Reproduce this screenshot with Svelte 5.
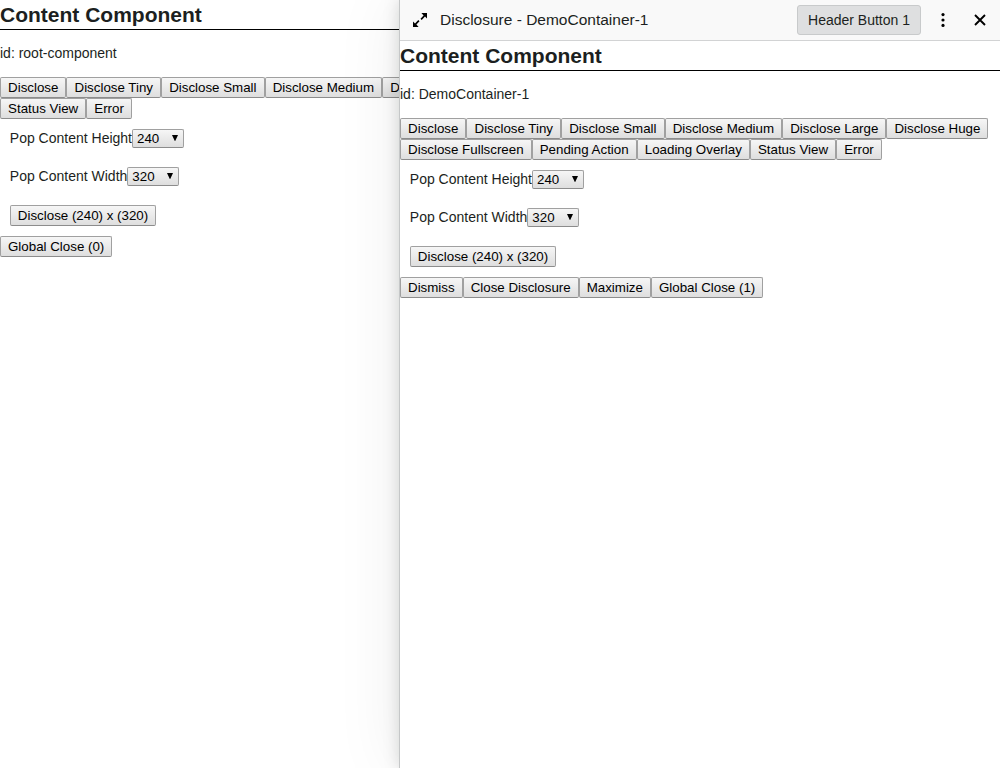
<script>
  const actions = ['Disclose', 'Disclose Tiny', 'Disclose Small', 'Disclose Medium', 'Disclose Large', 'Disclose Huge', 'Disclose Fullscreen', 'Pending Action', 'Loading Overlay', 'Status View', 'Error'];
</script>

{#snippet picker(label, value)}
  <div class="field">
    <span>{label}</span><button class="select"><span>{value}</span><svg width="6" height="6" viewBox="0 0 6 6"><path d="M0 0h6L3.2 6h-.4z" /></svg></button>
  </div>
{/snippet}

{#snippet content(id, footer)}
  <h2>Content Component</h2>
  <p>id: {id}</p>
  <div class="row">
    {#each actions as action}<button class="btn">{action}</button>{/each}
  </div>
  <div class="form">
    {@render picker('Pop Content Height', 240)}
    {@render picker('Pop Content Width', 320)}
    <button class="btn">Disclose (240) x (320)</button>
  </div>
  <div class="row footer">
    {#each footer as action}<button class="btn">{action}</button>{/each}
  </div>
{/snippet}

<div class="page">
  <main>{@render content('root-component', ['Global Close (0)'])}</main>
  <aside>
    <header>
      <svg class="expand" width="14" height="14" viewBox="0 0 14 14">
        <path d="M8.4 0H14v5.6l-2-2-3.3 3.3-1.2-1.2 3.1-3.3zM0 8.4l2 2 3.3-3.3 1.2 1.2-3.1 3.3 2.2 2.4H0z" />
      </svg>
      <span class="title">Disclosure - DemoContainer-1</span>
      <button class="header-btn">Header Button 1</button>
      <svg class="dots" width="4" height="14" viewBox="0 0 4 14">
        <circle cx="2" cy="1.6" r="1.6" /><circle cx="2" cy="7" r="1.6" /><circle cx="2" cy="12.4" r="1.6" />
      </svg>
      <svg width="12" height="12" viewBox="0 0 12 12"><path d="M1 1l10 10M11 1L1 11" stroke="#000" stroke-width="1.9" /></svg>
    </header>
    {@render content('DemoContainer-1', ['Dismiss', 'Close Disclosure', 'Maximize', 'Global Close (1)'])}
  </aside>
</div>

<style>
  :global(body) {
    margin: 0;
    background: #fff;
  }
  .page {
    position: relative;
    height: 768px;
    overflow: hidden;
    color: #1c1f21;
    font: 14px/18px 'Liberation Sans', Arial, sans-serif;
  }
  main {
    width: 1000px;
  }
  aside {
    position: absolute;
    top: 0;
    right: 0;
    bottom: 0;
    width: 600px;
    background: #fff;
    box-shadow: 0 0 0 1px #c5c7c8, 0 0 16px rgba(0, 20, 10, 0.17), 0 0 64px rgba(0, 10, 5, 0.08);
  }
  header {
    display: flex;
    align-items: center;
    box-sizing: border-box;
    height: 41px;
    padding: 0 14px 0 13px;
    border-bottom: 1px solid #d2d3d4;
    background: #f9f9f9;
  }
  .title {
    flex: 1;
    margin-left: 13px;
    font-size: 15.5px;
  }
  .header-btn {
    box-sizing: border-box;
    width: 124px;
    height: 30px;
    padding: 0;
    border: 1px solid #c8cacb;
    border-radius: 3px;
    background: #dedfe0;
    color: #1c1f21;
    font: 14px 'Liberation Sans', Arial, sans-serif;
  }
  .dots {
    margin: 0 29px 0 20px;
  }
  h2 {
    box-sizing: border-box;
    height: 30px;
    margin: 0;
    padding-top: 3px;
    border-bottom: 1px solid #000;
    font-size: 21px;
    line-height: 24px;
  }
  p {
    margin: 14px 0 15px;
  }
  .row {
    display: flex;
    flex-wrap: wrap;
  }
  .btn,
  .select {
    box-sizing: border-box;
    display: block;
    height: 21px;
    margin: 0;
    padding: 0 7.045px;
    border: 1px solid #a0a0a0;
    border-bottom-color: #8c8c8c;
    border-radius: 2px;
    background: linear-gradient(#f6f6f6, #dedede);
    color: #000;
    font: 13.333px/19px 'Liberation Sans', Arial, sans-serif;
    white-space: nowrap;
  }
  .btn {
    padding: 0 7.05px;
  }
  .footer .btn {
    padding: 0 7px;
  }
  .form {
    padding: 10px 9.8px;
  }
  .field {
    display: flex;
    height: 19px;
    margin-bottom: 19px;
    line-height: 19px;
  }
  .select {
    display: flex;
    align-items: center;
    justify-content: space-between;
    width: 52px;
    height: 19px;
    padding: 0 5px 0 4px;
    line-height: 17px;
  }
  .select svg {
    margin-bottom: 2px;
  }
</style>
